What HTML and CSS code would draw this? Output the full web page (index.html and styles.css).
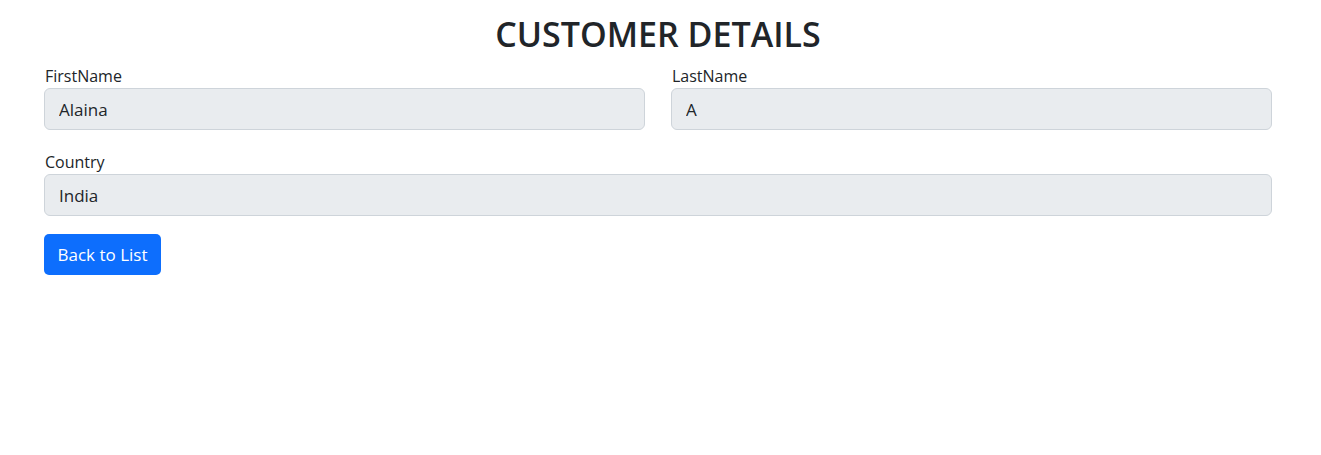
FILE: index.html
```html
<!DOCTYPE html>
<html lang="en">
<head>
<meta charset="utf-8">
<title>Customer Details</title>
<link rel="stylesheet" href="styles.css">
</head>
<body>
<main class="page">
  <h1 class="title">CUSTOMER DETAILS</h1>
  <div class="row two">
    <div class="field">
      <label class="label">FirstName</label>
      <input class="input" type="text" value="Alaina" disabled>
    </div>
    <div class="field">
      <label class="label">LastName</label>
      <input class="input" type="text" value="A" disabled>
    </div>
  </div>
  <div class="row">
    <div class="field">
      <label class="label">Country</label>
      <input class="input" type="text" value="India" disabled>
    </div>
  </div>
  <div class="actions">
    <a class="btn" href="#">Back to List</a>
  </div>
</main>
</body>
</html>
```

FILE: styles.css
```css
html, body {
  margin: 0;
  padding: 0;
  background: #fff;
}
body {
  font-family: "Open Sans", "Noto Sans", sans-serif;
  color: #212529;
  font-size: 16px;
}
.page {
  padding: 0 49px 0 44px;
}
.title {
  margin: 10px 0 6px;
  text-align: center;
  font-size: 34px;
  line-height: 48px;
  font-weight: 600;
}
.row {
  display: grid;
  grid-template-columns: 1fr;
  margin-bottom: 20px;
}
.row.two {
  grid-template-columns: 1fr 1fr;
  column-gap: 26px;
}
.field {
  display: flex;
  flex-direction: column;
}
.label {
  display: block;
  font-size: 16px;
  line-height: 24px;
  padding-left: 1px;
}
.input {
  box-sizing: border-box;
  height: 42px;
  width: 100%;
  margin: 0;
  padding: 0 14px;
  font-family: inherit;
  font-size: 17px;
  color: #212529;
  background: #e9ecef;
  border: 1px solid #ced4da;
  border-radius: 6px;
  opacity: 1;
  -webkit-text-fill-color: #212529;
}
.actions {
  margin-top: -2px;
}
.btn {
  display: inline-flex;
  align-items: center;
  box-sizing: border-box;
  height: 41px;
  width: 117px;
  justify-content: center;
  font-size: 17px;
  color: #fff;
  background: #0d6efd;
  border-radius: 5px;
  text-decoration: none;
}
```
